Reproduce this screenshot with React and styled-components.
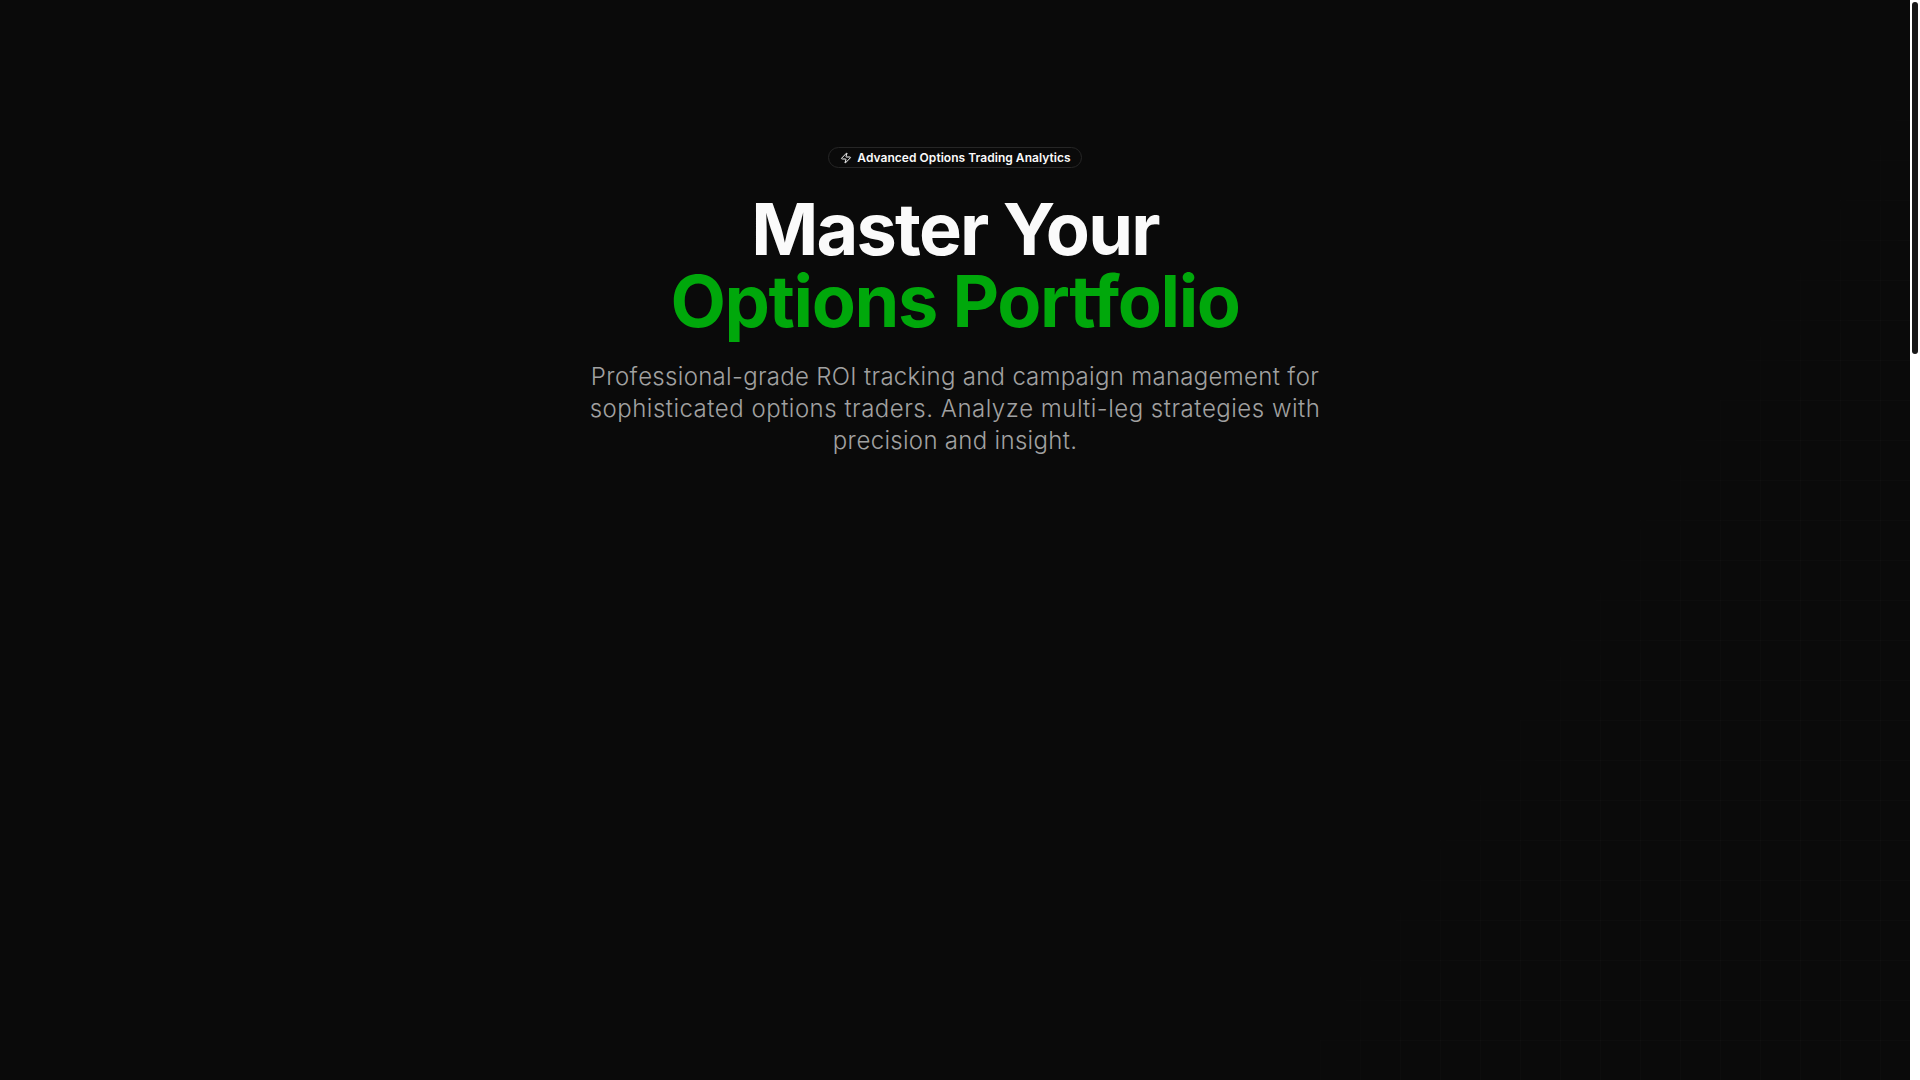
import React from 'react'
import styled, { createGlobalStyle } from 'styled-components'
import { Zap } from 'lucide-react'

const GlobalStyle = createGlobalStyle`
  * { box-sizing: border-box; }
  html, body { margin: 0; padding: 0; height: 100%; background: #0a0a0a; overflow: hidden; }
  body { font-family: Inter, "Liberation Sans", sans-serif; color: #fafafa; }
`

const Shell = styled.div`
  height: 100vh;
  display: flex;
  background: #fff;
`

const Viewport = styled.div`
  flex: 1;
  min-width: 0;
  overflow: hidden;
`

const ScrollTrack = styled.div`
  flex: none;
  width: 10px;
  padding: 2px;
  background: #fff;
`

const ScrollThumb = styled.div`
  height: 352px;
  background: #171717;
  border-radius: 3px;
`

const Page = styled.main`
  position: relative;
  min-height: 100vh;
  background: #0a0a0a;
  display: flex;
  flex-direction: column;
  align-items: center;
`

const GridGlow = styled.div`
  position: absolute;
  inset: 0;
  pointer-events: none;
  background-image:
    linear-gradient(to right, rgba(255, 255, 255, 0.014) 1px, transparent 1px),
    linear-gradient(to bottom, rgba(255, 255, 255, 0.014) 1px, transparent 1px);
  background-size: 40px 40px;
  mask-image: linear-gradient(122deg, transparent 74%, #000 80%);
`

const Hero = styled.section`
  position: relative;
  width: 100%;
  padding-top: 147px;
  display: flex;
  flex-direction: column;
  align-items: center;
`

const Badge = styled.div`
  display: inline-flex;
  align-items: center;
  gap: 5px;
  height: 21px;
  padding: 0 10px 0 11px;
  border: 1px solid #262626;
  border-radius: 999px;
  font-size: 12px;
  font-weight: 600;
  letter-spacing: 0.04px;
  line-height: 16px;
  color: #fafafa;
  svg { width: 12px; height: 12px; }
`

const Title = styled.h1`
  margin: 25px 0 0;
  font-size: 72px;
  font-weight: 700;
  line-height: 71.5px;
  letter-spacing: -1.8px;
  font-feature-settings: "calt" 0;
  text-align: center;
  color: #fafafa;
`

const Accent = styled.span`
  display: block;
  color: #00a80b;
  letter-spacing: -1.37px;
`

const Lead = styled.p`
  margin: 25px 0 0;
  width: 768px;
  font-size: 24px;
  font-weight: 300;
  font-kerning: none;
  line-height: 32px;
  text-align: center;
  color: #a1a1a1;
`

const LeadLine = styled.span`
  display: block;
  letter-spacing: ${(p) => p.$tracking}px;
`

export default function App() {
  return (
    <>
      <GlobalStyle />
      <Shell>
        <Viewport>
          <Page>
            <GridGlow />
            <Hero>
              <Badge>
                <Zap />
                Advanced Options Trading Analytics
              </Badge>
              <Title>
                Master Your
                <Accent>Options Portfolio</Accent>
              </Title>
              <Lead>
                <LeadLine $tracking={0.3}>Professional-grade ROI tracking and campaign management for</LeadLine>
                <LeadLine $tracking={0.5}>sophisticated options traders. Analyze multi-leg strategies with</LeadLine>
                <LeadLine $tracking={0.3}>precision and insight.</LeadLine>
              </Lead>
            </Hero>
          </Page>
        </Viewport>
        <ScrollTrack>
          <ScrollThumb />
        </ScrollTrack>
      </Shell>
    </>
  )
}
